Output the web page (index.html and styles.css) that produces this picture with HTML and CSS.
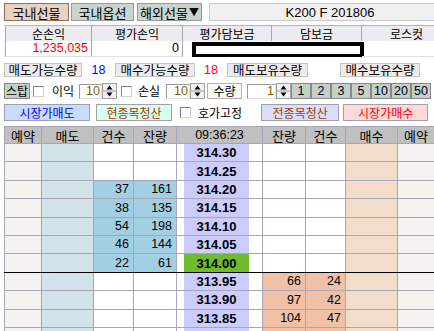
FILE: index.html
```html
<!DOCTYPE html>
<html lang="ko">
<head>
<meta charset="utf-8">
<title>K200 F 201806</title>
<link rel="stylesheet" href="styles.css">
</head>
<body>
<div class="app">
  <div class="tabs">
    <div class="tab tab-on">국내선물</div>
    <div class="tab tab-opt">국내옵션</div>
    <div class="tab tab-ovs">해외선물<span class="caret">▼</span></div>
    <div class="symbol">K200 F 201806</div>
  </div>

  <div class="summary">
    <div class="sh sh-first">순손익</div>
    <div class="sh">평가손익</div>
    <div class="sh">평가담보금</div>
    <div class="sh">담보금</div>
    <div class="sh">로스컷</div>
    <div class="sv sv-first red">1,235,035</div>
    <div class="sv">0</div>
    <div class="sv-wide"><div class="mask"></div></div>
    <div class="sv sv-last"></div>
  </div>

  <div class="qty-row">
    <div class="qlabel w78">매도가능수량</div>
    <div class="qval w33 blue">18</div>
    <div class="qlabel w80">매수가능수량</div>
    <div class="qval w32 red">18</div>
    <div class="qlabel w81">매도보유수량</div>
    <div class="qval w32"></div>
    <div class="qlabel w80">매수보유수량</div>
    <div class="qval w14"></div>
  </div>

  <div class="ctrl-row">
    <div class="gbtn stop">스탑</div>
    <div class="chk chk-1"></div>
    <div class="lbl lbl-profit">이익</div>
    <div class="inp inp-1">10</div>
    <svg class="spin" viewBox="0 0 15 16" width="15" height="16"><rect x="0.5" y="0.5" width="14" height="15" fill="#f0f0f0" stroke="#a0a0a0"/><line x1="1" y1="8" x2="14" y2="8" stroke="#a0a0a0"/><path d="M4.5 6.5 L7.5 2.5 L10.5 6.5Z" fill="#000"/><path d="M4.5 9.5 L7.5 13.5 L10.5 9.5Z" fill="#000"/></svg>
    <div class="chk chk-2"></div>
    <div class="lbl lbl-loss">손실</div>
    <div class="inp inp-2">10</div>
    <svg class="spin" viewBox="0 0 15 16" width="15" height="16"><rect x="0.5" y="0.5" width="14" height="15" fill="#f0f0f0" stroke="#a0a0a0"/><line x1="1" y1="8" x2="14" y2="8" stroke="#a0a0a0"/><path d="M4.5 6.5 L7.5 2.5 L10.5 6.5Z" fill="#000"/><path d="M4.5 9.5 L7.5 13.5 L10.5 9.5Z" fill="#000"/></svg>
    <div class="qtybox">수량</div>
    <div class="inp inp-3">1</div>
    <svg class="spin" viewBox="0 0 15 16" width="15" height="16"><rect x="0.5" y="0.5" width="14" height="15" fill="#f0f0f0" stroke="#a0a0a0"/><line x1="1" y1="8" x2="14" y2="8" stroke="#a0a0a0"/><path d="M4.5 6.5 L7.5 2.5 L10.5 6.5Z" fill="#000"/><path d="M4.5 9.5 L7.5 13.5 L10.5 9.5Z" fill="#000"/></svg>
    <div class="nbtn">1</div>
    <div class="nbtn">2</div>
    <div class="nbtn">3</div>
    <div class="nbtn">5</div>
    <div class="nbtn">10</div>
    <div class="nbtn">20</div>
    <div class="nbtn">50</div>
  </div>

  <div class="order-row">
    <div class="obtn mkt-sell">시장가매도</div>
    <div class="obtn clr-one">현종목청산</div>
    <div class="chk chk-3"></div>
    <div class="lbl lbl-fix">호가고정</div>
    <div class="obtn clr-all">전종목청산</div>
    <div class="obtn mkt-buy">시장가매수</div>
  </div>

  <div class="book">
    <div class="grid grid-top">
      <div class="hd">예약</div>
      <div class="hd">매도</div>
      <div class="hd">건수</div>
      <div class="hd">잔량</div>
      <div class="hd hd-time">09:36:23</div>
      <div class="hd">잔량</div>
      <div class="hd">건수</div>
      <div class="hd">매수</div>
      <div class="hd">예약</div>

      <div class="c res"></div><div class="c sell"></div><div class="c"></div><div class="c"></div>
      <div class="c pc"><div class="px">314.30</div></div>
      <div class="c"></div><div class="c"></div><div class="c buy"></div><div class="c res"></div>

      <div class="c res"></div><div class="c sell"></div><div class="c"></div><div class="c"></div>
      <div class="c pc"><div class="px">314.25</div></div>
      <div class="c"></div><div class="c"></div><div class="c buy"></div><div class="c res"></div>

      <div class="c res"></div><div class="c sell"></div><div class="c ask">37</div><div class="c ask">161</div>
      <div class="c pc"><div class="px">314.20</div></div>
      <div class="c"></div><div class="c"></div><div class="c buy"></div><div class="c res"></div>

      <div class="c res"></div><div class="c sell"></div><div class="c ask">38</div><div class="c ask">135</div>
      <div class="c pc"><div class="px">314.15</div></div>
      <div class="c"></div><div class="c"></div><div class="c buy"></div><div class="c res"></div>

      <div class="c res"></div><div class="c sell"></div><div class="c ask">54</div><div class="c ask">198</div>
      <div class="c pc"><div class="px">314.10</div></div>
      <div class="c"></div><div class="c"></div><div class="c buy"></div><div class="c res"></div>

      <div class="c res"></div><div class="c sell"></div><div class="c ask">46</div><div class="c ask">144</div>
      <div class="c pc"><div class="px">314.05</div></div>
      <div class="c"></div><div class="c"></div><div class="c buy"></div><div class="c res"></div>

      <div class="c res"></div><div class="c sell"></div><div class="c ask">22</div><div class="c ask">61</div>
      <div class="c pc"><div class="px px-cur">314.00</div></div>
      <div class="c"></div><div class="c"></div><div class="c buy"></div><div class="c res"></div>
    </div>
    <div class="divider"></div>
    <div class="grid">
      <div class="c res"></div><div class="c sell"></div><div class="c"></div><div class="c"></div>
      <div class="c pc"><div class="px">313.95</div></div>
      <div class="c bid">66</div><div class="c bid">24</div><div class="c buy"></div><div class="c res"></div>

      <div class="c res"></div><div class="c sell"></div><div class="c"></div><div class="c"></div>
      <div class="c pc"><div class="px">313.90</div></div>
      <div class="c bid">97</div><div class="c bid">42</div><div class="c buy"></div><div class="c res"></div>

      <div class="c res"></div><div class="c sell"></div><div class="c"></div><div class="c"></div>
      <div class="c pc"><div class="px">313.85</div></div>
      <div class="c bid">104</div><div class="c bid">47</div><div class="c buy"></div><div class="c res"></div>

      <div class="c res"></div><div class="c sell"></div><div class="c"></div><div class="c"></div>
      <div class="c pc"><div class="px"></div></div>
      <div class="c bid"></div><div class="c bid"></div><div class="c buy"></div><div class="c res"></div>
    </div>
  </div>
</div>
</body>
</html>
```

FILE: styles.css
```css
* { box-sizing: border-box; }
html, body { margin: 0; padding: 0; overflow: hidden; background: #fff; }
body {
  width: 434px;
  height: 331px;
  font-family: "Noto Sans CJK KR", sans-serif;
  font-size: 12px;
  line-height: 1;
  color: #000;
}
.app { width: 434px; }

/* ---------- tabs ---------- */
.tabs { display: flex; height: 18px; margin-top: 3px; padding-left: 4px; }
.tab {
  flex: none;
  display: flex; align-items: center; justify-content: center;
  font-size: 13px;
  border: 1px solid #9a9a9a;
  background: #c9d3cf;
}
.tab-on { width: 65px; background: #e6d2c3; border-color: #9c6b58; }
.tab-opt { width: 63px; margin-left: 2px; }
.tab-ovs { width: 65px; margin-left: 3px; }
.caret { font-size: 10px; margin-left: 1px; }
.symbol {
  flex: none;
  width: 242px; margin-left: 7px;
  display: flex; align-items: center; justify-content: center;
  background: #f0f0f0;
  border: 1px solid #c8c8c8;
  font-family: "Liberation Sans", sans-serif;
  font-size: 13px;
}

/* ---------- summary ---------- */
.summary {
  display: grid;
  grid-template-columns: 87px 91px 89px 90px 90px;
  grid-template-rows: 16px 16px;
  margin: 4px 0 0 5px;
  width: max-content;
}
.sh {
  display: flex; align-items: center; justify-content: center;
  background: #ececf0;
  border-top: 1px solid #b4b4bc;
  border-right: 1px solid #a8a8b0;
  font-size: 12px;
}
.sh-first, .sv-first { border-left: 1px solid #a8a8b0; }
.sv {
  display: flex; align-items: center; justify-content: flex-end;
  padding-right: 3px;
  border-right: 1px solid #a8a8b0;
  border-bottom: 1px solid #e0e0e4;
  font-family: "Liberation Sans Narrow", "Liberation Sans", sans-serif;
  font-size: 12.5px;
}
.sv-last { border-right: none; }
.sv-wide { grid-column: 3 / 5; }
.mask {
  height: 15px;
  margin: 1px -2px 0 9px;
  border: 4px solid #000;
  border-bottom-width: 3px;
  background: #fff;
}

.red { color: #ff0000; }
.blue { color: #0000ff; }

/* ---------- qty row ---------- */
.qty-row { display: flex; height: 14px; margin: 6px 0 0 4px; }
.qlabel {
  flex: none;
  display: flex; align-items: center; justify-content: center;
  background: #ececec;
  border: 1px solid #c4c4c4;
  font-size: 12.5px;
}
.qval {
  flex: none;
  display: flex; align-items: center; justify-content: center;
  font-family: "Liberation Sans Narrow", "Liberation Sans", sans-serif;
  font-size: 12.5px;
}
.w78 { width: 78px; } .w80 { width: 80px; } .w81 { width: 81px; }
.w33 { width: 33px; } .w32 { width: 32px; } .w14 { width: 10px; }

/* ---------- control row ---------- */
.ctrl-row { display: flex; align-items: center; height: 16px; margin: 6px 0 0 4px; }
.ctrl-row > * { flex: none; }
.gbtn, .nbtn {
  height: 16px;
  display: flex; align-items: center; justify-content: center;
  background: #c5d0c9;
  border: 1px solid #888;
}
.stop { width: 26px; font-size: 12px; }
.chk {
  width: 11px; height: 11px;
  background: #fff;
  border: 1px solid #808080;
  border-right-color: #d0d0d0;
  border-bottom-color: #d0d0d0;
}
.chk-1 { margin-left: 3px; }
.chk-2 { margin-left: 4px; }
.lbl { font-size: 12px; }
.lbl-profit { margin-left: 8px; width: 27px; }
.lbl-loss { margin-left: 6px; width: 28px; }
.inp {
  height: 15px;
  display: flex; align-items: center; justify-content: flex-end;
  padding-right: 1px;
  background: #fff;
  border: 1px solid #9c9c9c;
  border-right-color: #e0e0e0;
  border-bottom-color: #e0e0e0;
  color: #7c6200;
  font-family: "Liberation Sans Narrow", "Liberation Sans", sans-serif;
  font-size: 12.5px;
}
.inp-1 { width: 23px; }
.inp-2 { width: 24px; }
.inp-3 { width: 29px; margin-left: 5px; }
.spin { display: block; }
.qtybox {
  width: 35px; height: 16px; margin-left: 2px;
  display: flex; align-items: center; justify-content: center;
  background: #fafafa;
  border: 1px solid #b0b0b0;
  font-size: 12px;
}
.nbtn {
  width: 20px;
  font-family: "Liberation Sans Narrow", "Liberation Sans", sans-serif;
  font-size: 12.5px;
}

/* ---------- order row ---------- */
.order-row { display: flex; align-items: center; height: 17px; margin: 5px 0 0 4px; }
.order-row > * { flex: none; }
.obtn {
  height: 17px;
  display: flex; align-items: center; justify-content: center;
  font-size: 12px;
  border: 1px solid #a0a0a8;
}
.mkt-sell { width: 86px; background: #c8dcff; color: #0000ff; }
.clr-one { width: 76px; margin-left: 6px; background: #d6fff0; color: #a04000; }
.chk-3 { margin-left: 8px; }
.lbl-fix { margin-left: 7px; }
.clr-all { width: 78px; margin-left: 19px; background: #dcdcff; color: #a04000; }
.mkt-buy { width: 85px; margin-left: 4px; background: #ffd8d8; color: #ff0000; }

/* ---------- order book ---------- */
.book { margin: 5px 0 0 4px; width: max-content; }
.grid {
  display: grid;
  grid-template-columns: 36px 51px 39px 42px 85px 42px 39px 51px 36px;
  grid-auto-rows: 17.4px;
  gap: 1px;
  padding-left: 1px;
  background: #a6a6b6;
}
.grid-top { padding-top: 1px; grid-template-rows: 16px; }
.divider { height: 1px; background: #000; }

.hd {
  display: flex; align-items: center; justify-content: center;
  background: #c0c0c0;
  font-size: 13px;
}
.hd-time {
  font-family: "Liberation Sans Narrow", "Liberation Sans", sans-serif;
  font-size: 12.5px;
}
.c {
  display: flex; align-items: center; justify-content: flex-end;
  padding-right: 4px;
  background: #fff;
  font-family: "Liberation Sans Narrow", "Liberation Sans", sans-serif;
  font-size: 12.5px;
}
.res { background: #f4f2ee; }
.sell { background: #d3e3ea; }
.buy { background: #f2ddca; }
.ask { background: #a3cfe3; }
.bid { background: #f0c1a6; }
.pc { padding-right: 0; justify-content: flex-start; align-items: stretch; }
.px {
  width: 65px; margin-left: 7px;
  display: flex; align-items: center; justify-content: center;
  background: #ccccff;
  font-family: "Liberation Sans", sans-serif;
  font-weight: bold;
  font-size: 13px;
}
.px-cur { background: #6fbb2f; }
```
